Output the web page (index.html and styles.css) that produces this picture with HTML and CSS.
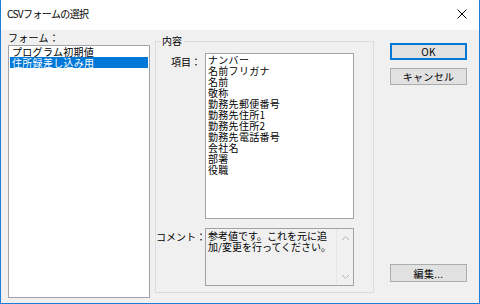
FILE: index.html
```html
<!DOCTYPE html>
<html lang="ja">
<head>
    <meta charset="UTF-8">
    <title>CSVフォームの選択</title>
    <link rel="stylesheet" href="styles.css">
</head>
<body>
    <div class="window">
        <div class="titlebar">
            <span class="title">CSVフォームの選択</span>
            <span class="close">
                <svg width="10" height="10" viewBox="0 0 10 10">
                    <path d="M0.5 0.5 L9.5 9.5 M9.5 0.5 L0.5 9.5" stroke="#000" stroke-width="1" fill="none"/>
                </svg>
            </span>
        </div>

        <div class="content">
            <div class="forms">
                <div class="label">フォーム：</div>
                <div class="listbox form-list">
                    <div class="item">プログラム初期値</div>
                    <div class="item selected">住所録差し込み用</div>
                </div>
            </div>

            <fieldset class="group">
                <legend>内容</legend>
                <div class="row fields-row">
                    <div class="row-label">項目：</div>
                    <div class="listbox fields-list">
                        <div class="item">ナンバー</div>
                        <div class="item">名前フリガナ</div>
                        <div class="item">名前</div>
                        <div class="item">敬称</div>
                        <div class="item">勤務先郵便番号</div>
                        <div class="item">勤務先住所1</div>
                        <div class="item">勤務先住所2</div>
                        <div class="item">勤務先電話番号</div>
                        <div class="item">会社名</div>
                        <div class="item">部署</div>
                        <div class="item">役職</div>
                    </div>
                </div>
                <div class="row comment-row">
                    <div class="row-label">コメント：</div>
                    <div class="comment-box">
                        <div class="comment-text">参考値です。これを元に追<br>加/変更を行ってください。</div>
                        <div class="scrollbar">
                            <svg width="9" height="6" viewBox="0 0 9 6">
                                <path d="M1 5 L4.5 1.5 L8 5" stroke="#b4b4b4" stroke-width="1" fill="none"/>
                            </svg>
                            <svg width="9" height="6" viewBox="0 0 9 6">
                                <path d="M1 1 L4.5 4.5 L8 1" stroke="#b4b4b4" stroke-width="1" fill="none"/>
                            </svg>
                        </div>
                    </div>
                </div>
            </fieldset>

            <div class="buttons">
                <button class="btn default">OK</button>
                <button class="btn">キャンセル</button>
                <button class="btn edit">編集...</button>
            </div>
        </div>
    </div>
</body>
</html>
```

FILE: styles.css
```css
body {
    margin: 0;
    font-family: "Noto Sans CJK JP", "Noto Sans", sans-serif;
    font-size: 10px;
    color: #000;
    background: #fff;
}

.window {
    width: 480px;
    height: 304px;
    box-sizing: border-box;
    border: 1px solid #1c7ed6;
    border-top: none;
    display: flex;
    flex-direction: column;
    background-color: #f0f0f0;
}

.titlebar {
    height: 30px;
    background-color: #fff;
    display: flex;
    align-items: center;
    justify-content: space-between;
    padding: 0 12px 0 6px;
    flex-shrink: 0;
}

.title {
    font-size: 10px;
    letter-spacing: -0.6px;
    line-height: 14px;
    margin-top: -2px;
}

.close {
    display: flex;
    margin-top: -2px;
}

.content {
    flex: 1;
    display: flex;
    align-items: flex-start;
    padding-left: 7px;
}

/* left column */
.forms {
    width: 142px;
    display: flex;
    flex-direction: column;
}

.label {
    height: 14px;
    line-height: 14px;
    padding-top: 1px;
    letter-spacing: 0.3px;
}

.listbox {
    background-color: #fff;
    border: 1px solid #a0a4aa;
    box-sizing: border-box;
    overflow: hidden;
}

.item {
    line-height: 11px;
    height: 11px;
    padding-left: 2px;
    white-space: nowrap;
    letter-spacing: 0.3px;
}

.form-list {
    height: 253px;
}

.form-list .item {
    margin: 0 1px;
}

.selected {
    background-color: #0078d7;
    color: #fff;
}

/* group box */
.group {
    margin: 4px 0 0 5px;
    padding: 5px 19px 6px 0;
    width: 219px;
    box-sizing: border-box;
    border: 1px solid #dcdcdc;
    min-width: 0;
}

.group legend {
    padding: 0 2px;
    margin-left: 4px;
    line-height: 14px;
    font-size: 10px;
}

.row {
    display: grid;
    grid-template-columns: 49px 149px;
}

.row-label {
    text-align: right;
    padding-right: 4px;
    line-height: 14px;
    padding-top: 2px;
    white-space: nowrap;
}

.fields-list {
    height: 166px;
    padding-top: 0;
}

.comment-row {
    margin-top: 9px;
}

.comment-box {
    height: 58px;
    box-sizing: border-box;
    border: 1px solid #a0a4aa;
    background-color: #f0f0f0;
    display: flex;
}

.comment-text {
    flex: 1;
    padding: 1px 0 0 2px;
    line-height: 11px;
    white-space: nowrap;
}

.scrollbar {
    width: 16px;
    border-left: 1px solid #e6e6e6;
    display: flex;
    flex-direction: column;
    align-items: center;
    justify-content: space-between;
    padding: 6px 0 5px;
}

/* buttons */
.buttons {
    margin-left: 16px;
    width: 77px;
    height: 252px;
    display: flex;
    flex-direction: column;
    padding-top: 13px;
    box-sizing: border-box;
}

.btn {
    height: 17px;
    box-sizing: border-box;
    background-color: #e1e1e1;
    border: 1px solid #adadad;
    font-family: inherit;
    font-size: 10px;
    line-height: 13px;
    padding: 0;
    margin-bottom: 8px;
    color: #000;
    letter-spacing: 0.3px;
}

.btn.default {
    border: 2px solid #0078d7;
}

.btn.edit {
    margin-top: auto;
    height: 18px;
    margin-bottom: 0;
}
```
